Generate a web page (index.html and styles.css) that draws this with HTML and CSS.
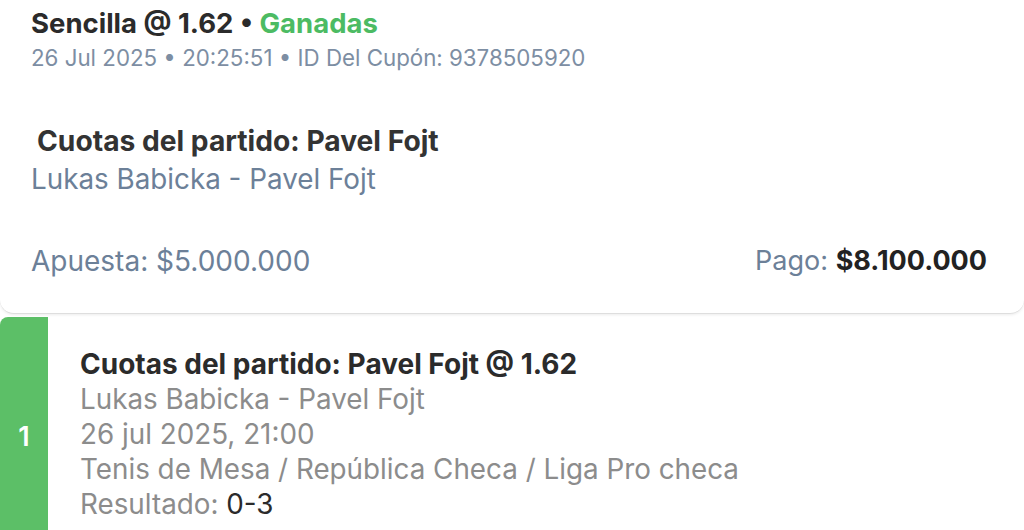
FILE: index.html
```html
<!DOCTYPE html>
<html lang="es">
<head>
  <meta charset="UTF-8">
  <meta name="viewport" content="width=device-width, initial-scale=1.0">
  <title>Cupón</title>
  <link rel="stylesheet" href="styles.css">
</head>
<body>

<div class="card">
  <div class="title">Sencilla @ 1.62 • <span class="won">Ganadas</span></div>
  <div class="meta">26 Jul 2025 • 20:25:51 • ID Del Cupón: 9378505920</div>

  <div class="market">Cuotas del partido: Pavel Fojt</div>
  <div class="event">Lukas Babicka - Pavel Fojt</div>

  <div class="totals">
    <span>Apuesta: $5.000.000</span>
    <span class="pay">Pago: <b>$8.100.000</b></span>
  </div>
</div>

<div class="selection">
  <div class="num">1</div>
  <div class="details">
    <div class="pick">Cuotas del partido: Pavel Fojt @ 1.62</div>
    <div>Lukas Babicka - Pavel Fojt</div>
    <div>26 jul 2025, 21:00</div>
    <div>Tenis de Mesa / República Checa / Liga Pro checa</div>
    <div>Resultado: <span class="score">0-3</span></div>
  </div>
</div>

</body>
</html>
```

FILE: styles.css
```css
body {
  margin: 0;
  background: #fff;
  font-family: Inter, 'Noto Sans', sans-serif;
  overflow: hidden;
}

.card {
  background: white;
  height: 314px;
  box-sizing: border-box;
  padding: 6px 37px 0 31px;
  border-bottom: 1px solid #dedede;
  border-radius: 0 0 14px 14px;
  box-shadow: 0 1px 3px rgba(0, 0, 0, 0.08);
}

.title {
  font-size: 27.5px;
  font-weight: 700;
  color: #2b2b2b;
  line-height: 34px;
}

.won {
  color: #4cbb63;
}

.meta {
  margin-top: 3px;
  font-size: 22.3px;
  color: #7d8ea3;
  line-height: 30px;
}

.market {
  margin-top: 51px;
  padding-left: 6px;
  font-size: 28.2px;
  font-weight: 700;
  color: #333;
  line-height: 34px;
}

.event {
  margin-top: 4px;
  font-size: 27.8px;
  color: #6c8098;
  line-height: 34px;
}

.totals {
  display: flex;
  justify-content: space-between;
  margin-top: 48px;
  font-size: 28px;
  color: #6c8098;
  line-height: 34px;
}

.totals .pay {
  font-size: 27px;
}

.totals b {
  color: #222;
}

.selection {
  display: flex;
  margin-top: 3px;
  height: 230px;
}

.num {
  width: 48px;
  background: #5cbf67;
  border-radius: 8px 0 0 0;
  color: white;
  font-size: 27px;
  font-weight: 600;
  display: flex;
  align-items: center;
  justify-content: center;
  padding-top: 8px;
  box-sizing: border-box;
}

.details {
  padding: 30px 0 0 32px;
  font-size: 27.8px;
  line-height: 35px;
  color: #8c8c8c;
}

.pick {
  font-weight: 700;
  color: #2b2b2b;
  font-size: 28px;
}

.score {
  color: #2b2b2b;
}
```
